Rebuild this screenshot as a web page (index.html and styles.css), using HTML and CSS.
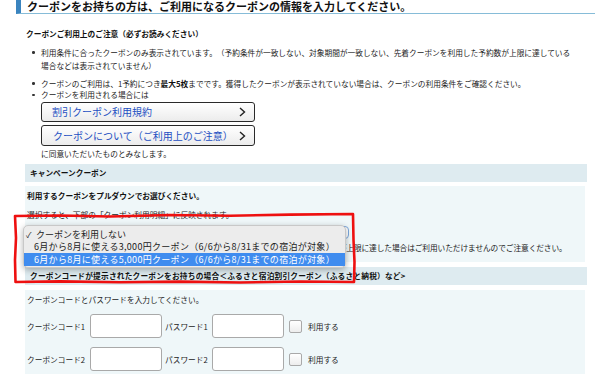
FILE: index.html
```html
<!DOCTYPE html>
<html lang="ja">
<head>
<meta charset="utf-8">
<link rel="stylesheet" href="styles.css">
</head>
<body>
<h2 class="title">クーポンをお持ちの方は、ご利用になるクーポンの情報を入力してください。</h2>

<div class="notice">
  <p class="notice-title">クーポンご利用上のご注意（必ずお読みください）</p>
  <ul class="bullets">
    <li class="li1">利用条件に合ったクーポンのみ表示されています。（予約条件が一致しない、対象期間が一致しない、先着クーポンを利用した予約数が上限に達している場合などは表示されていません）</li>
    <li class="li2">クーポンのご利用は、1予約につき<b>最大5枚</b>までです。獲得したクーポンが表示されていない場合は、クーポンの利用条件をご確認ください。</li>
    <li class="li3">クーポンを利用される場合には
      <div class="btns">
        <a class="btn">割引クーポン利用規約<svg class="chev" width="7" height="10" viewBox="0 0 7 10"><path d="M1 1 L5.5 5 L1 9" fill="none" stroke="#222" stroke-width="1.4"/></svg></a>
        <a class="btn">クーポンについて（ご利用上のご注意）<svg class="chev" width="7" height="10" viewBox="0 0 7 10"><path d="M1 1 L5.5 5 L1 9" fill="none" stroke="#222" stroke-width="1.4"/></svg></a>
      </div>
      <p class="agree">に同意いただいたものとみなします。</p>
    </li>
  </ul>
</div>

<div class="sec-head">キャンペーンクーポン</div>
<div class="panel panel1">
  <p class="strong">利用するクーポンをプルダウンでお選びください。</p>
  <p class="line2">選択すると、下部の「クーポン利用明細」に反映されます。</p>
  <div class="select-box"></div>
  <p class="note">※先着クーポン・数量限定クーポンは、表示されている場合でもクーポンを利用した予約数が上限に達した場合はご利用いただけませんのでご注意ください。</p>
</div>

<div class="sec-head sec2">クーポンコードが提示されたクーポンをお持ちの場合＜ふるさと宿泊割引クーポン（ふるさと納税）など&gt;</div>
<div class="panel panel2">
  <p class="plain">クーポンコードとパスワードを入力してください。</p>
  <div class="code-row">
    <span class="lbl1">クーポンコード1</span><span class="inp"></span>
    <span class="lbl2">パスワード1</span><span class="inp"></span>
    <span class="chk"></span><span class="use">利用する</span>
  </div>
  <div class="code-row">
    <span class="lbl1">クーポンコード2</span><span class="inp"></span>
    <span class="lbl2">パスワード2</span><span class="inp"></span>
    <span class="chk"></span><span class="use">利用する</span>
  </div>
</div>

<div class="menu">
  <div class="opt opt-first"><span class="check">✓</span>クーポンを利用しない</div>
  <div class="opt opt-long">6月から8月に使える3,000円クーポン（6/6から8/31までの宿泊が対象）</div>
  <div class="opt opt-long opt-sel">6月から8月に使える5,000円クーポン（6/6から8/31までの宿泊が対象）</div>
</div>

<svg class="redmark" width="600" height="374" viewBox="0 0 600 374">
  <path d="M15 216 L60 215.5 L110 216.5 L170 215 L230 215.8 L290 214.6 L353 214 L353.5 240 L354.5 262 L354 282 L300 281.5 L240 282.5 L180 281.6 L120 282.3 L60 281.4 L15.5 282 L15 260 L16 238 Z" fill="none" stroke="#ee1010" stroke-width="2.6" stroke-linejoin="round"/>
</svg>
</body>
</html>
```
FILE: styles.css
```css
* { box-sizing: border-box; }
body {
  margin: 0;
  width: 600px;
  height: 374px;
  overflow: hidden;
  position: relative;
  background: #fff;
  color: #1a1a1a;
  font-family: "Noto Sans CJK JP", "Noto Sans", sans-serif;
  font-size: 7.7px;
  line-height: 13px;
  text-spacing-trim: space-all;
}
p { margin: 0; }
.title {
  margin: 0 5px 0 16px;
  height: 14px;
  border-left: 5px solid #3a84bf;
  border-bottom: 1px solid #86bcd8;
  padding-left: 6px;
  font-size: 11px;
  line-height: 13px;
  font-weight: bold;
  color: #111;
}
.notice { margin-left: 26px; }
.notice-title {
  margin-top: 12.5px;
  font-weight: bold;
  color: #111;
}
.bullets {
  list-style: none;
  margin: 6px 0 0;
  padding: 0 0 0 15px;
  width: 549px;
}
.bullets li { position: relative; }
.bullets li::before {
  content: "";
  position: absolute;
  left: -9px;
  top: 5.5px;
  width: 2.5px;
  height: 2.5px;
  background: #333;
  border-radius: 50%;
}
.li1 { margin-bottom: 5px; }
.li2 { margin-bottom: -1.5px; }
.li2 b { font-weight: bold; color: #111; }
.btns {
  display: flex;
  flex-direction: column;
  gap: 3px;
  margin-top: 1px;
}
.btn {
  display: flex;
  align-items: center;
  justify-content: space-between;
  width: 214px;
  height: 20px;
  padding: 0 8px 0 10px;
  border: 1px solid #2a2a2a;
  border-radius: 3px;
  background: linear-gradient(#ffffff, #ececec);
  color: #1d4fc2;
  font-size: 10px;
  line-height: 18px;
}
.btn + .btn { height: 21px; padding-left: 11px; }
.chev { flex: none; }
.agree { margin-top: 0.5px; }
.sec-head {
  margin: 4.5px 13px 0 25px;
  height: 18px;
  background: #deebf0;
  padding-left: 5px;
  font-weight: bold;
  line-height: 18px;
  color: #111;
}
.panel {
  margin: 4px 15px 0 25px;
  background: #eff7f9;
  padding-left: 2px;
}
.panel1 { padding-top: 2.5px; padding-bottom: 8.5px; height: 76px; }
.strong { font-weight: bold; color: #111; }
.line2 { margin-top: 6px; }
.select-box {
  margin-top: 5.5px;
  width: 322px;
  height: 13px;
  border: 1px solid #7aa7dd;
  border-radius: 4px;
  background: #fff;
}
.note { margin-top: 1.5px; white-space: nowrap; letter-spacing: -0.08px; }
.sec2 { margin-top: 5px; letter-spacing: 0.2px; }
.panel2 { margin-top: 5px; padding-top: 2.5px; height: 90px; }
.code-row {
  display: flex;
  align-items: center;
  height: 24px;
  margin-top: 8.5px;
}
.code-row + .code-row { margin-top: 9px; }
.lbl1 { width: 63px; }
.lbl2 { width: 47px; margin-left: 3px; }
.inp {
  width: 72px;
  height: 24px;
  background: #fff;
  border: 1px solid #a9a9a9;
  border-radius: 3px;
}
.chk {
  width: 13px;
  height: 13px;
  margin-left: 5px;
  border: 1px solid #a9a9a9;
  border-radius: 2px;
  background: linear-gradient(#ffffff, #ededed);
}
.use { margin-left: 6px; }
.menu {
  position: absolute;
  left: 23px;
  top: 225px;
  width: 323px;
  height: 43px;
  padding-top: 3px;
  background: #ececec;
  border: 0.5px solid #c8c8c8;
  border-radius: 5px;
  box-shadow: 0 2px 6px rgba(0, 0, 0, 0.3);
  font-size: 9px;
  color: #222;
}
.opt {
  height: 12px;
  line-height: 12px;
  padding-left: 10px;
  white-space: nowrap;
}
.opt-long { letter-spacing: 0.3px; }
.opt-first { padding-left: 2px; }
.check { display: inline-block; width: 10px; font-size: 8px; }
.opt-sel {
  height: 13px;
  line-height: 13px;
  background: #3f8cef;
  color: #fff;
}
.redmark {
  position: absolute;
  left: 0;
  top: 0;
  pointer-events: none;
}
```
